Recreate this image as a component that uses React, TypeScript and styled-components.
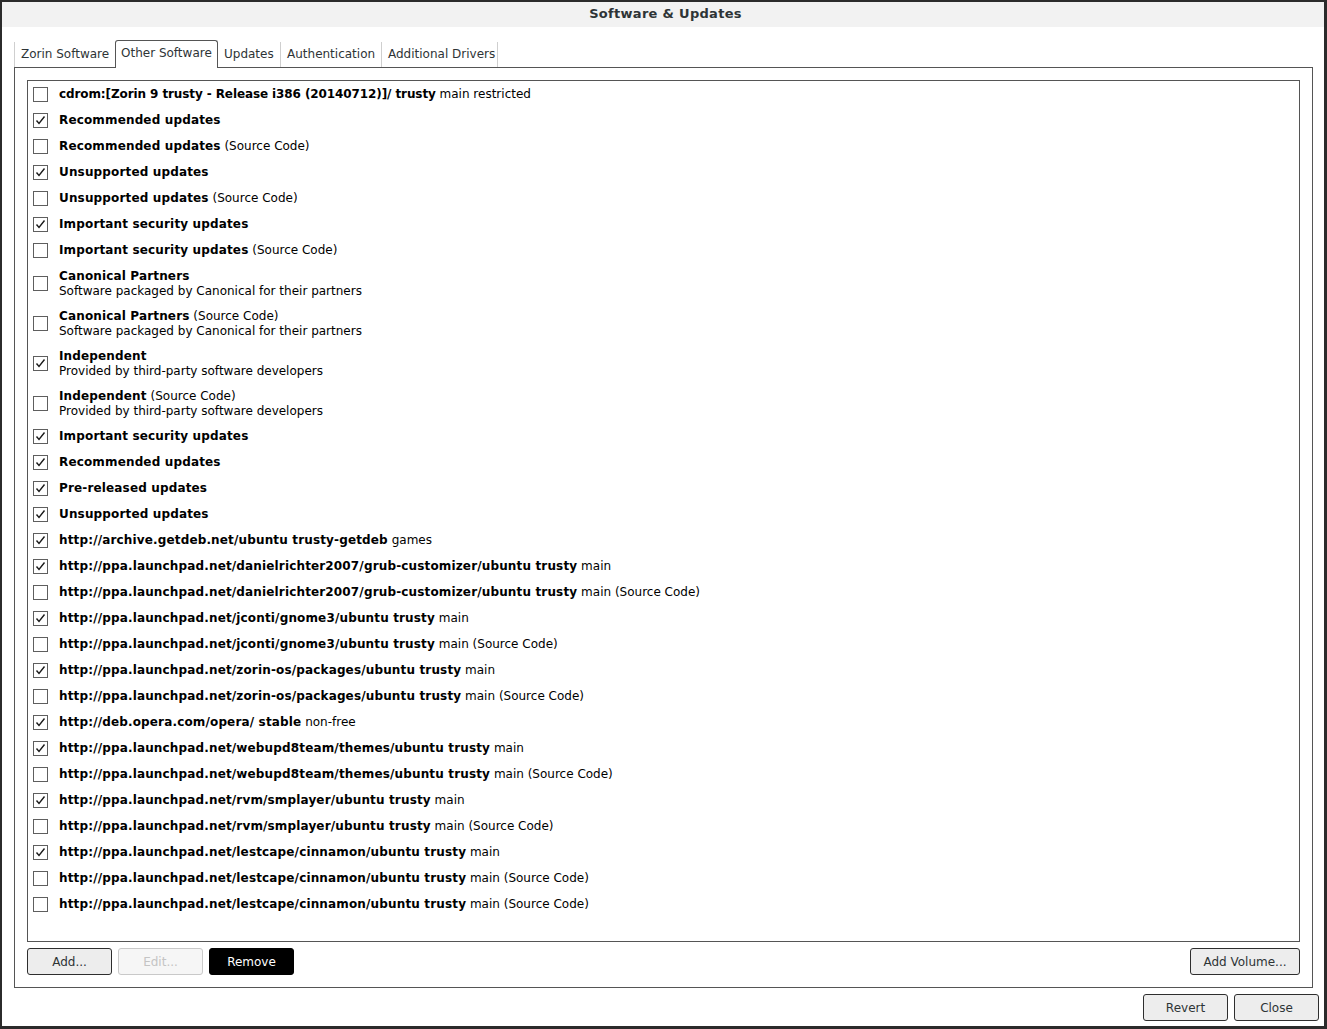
import React from "react";
import styled, { createGlobalStyle } from "styled-components";

const GlobalStyle = createGlobalStyle`
  html, body { margin: 0; padding: 0; background: #2b2b2b; }
  * { box-sizing: border-box; }
  body { font-family: "DejaVu Sans", "Liberation Sans", sans-serif; font-size: 12px; }
`;

const Window = styled.div`
  width: 1327px;
  height: 1029px;
  border: 2px solid #2b2b2b;
  border-right-width: 3px;
  border-bottom-width: 3px;
  background: #ffffff;
  display: flex;
  flex-direction: column;
`;

const TitleBar = styled.div`
  height: 25px;
  background: #f2f2f2;
  display: flex;
  align-items: center;
  justify-content: center;
  font-weight: bold;
  font-size: 13px;
  letter-spacing: 0.3px;
  color: #2e3436;
  flex-shrink: 0;
  padding: 0 0 2px 5px;
`;

const Body = styled.div`
  flex: 1;
  display: flex;
  flex-direction: column;
  padding-top: 13px;
`;

const Notebook = styled.div`
  margin: 0 11px 0 12px;
  display: flex;
  flex-direction: column;
`;

const TabRow = styled.div`
  display: flex;
  align-items: flex-end;
  height: 28px;
  border-bottom: 1px solid #555555;
`;

const Tab = styled.div<{ $active?: boolean; $first?: boolean; $w: number }>`
  display: flex;
  align-items: center;
  width: ${(p) => p.$w}px;
  color: #2e3436;
  background: #ffffff;
  white-space: nowrap;
  flex-shrink: 0;
  ${(p) =>
    p.$active
      ? `
    height: 28px;
    margin-bottom: -1px;
    margin-left: -1px;
    border: 1px solid #555555;
    border-bottom: none;
    border-radius: 3px 3px 0 0;
    padding: 0 0 3px 5px;
  `
      : `
    height: 25px;
    border-right: 1px solid #cfcfcf;
    ${p.$first ? "border-left: 1px solid #cfcfcf;" : ""}
    padding: 0 0 2px 6px;
  `}
`;

const Panel = styled.div`
  height: 920px;
  border: 1px solid #555555;
  border-top: none;
  padding: 12px;
  display: flex;
  flex-direction: column;
  gap: 6px;
`;

const ListFrame = styled.div`
  height: 862px;
  border: 1px solid #555555;
  background: #ffffff;
  display: flex;
  flex-direction: column;
`;

const Row = styled.div<{ $double?: boolean }>`
  height: ${(p) => (p.$double ? 40 : 26)}px;
  display: flex;
  align-items: center;
  padding-left: 5px;
  gap: 11px;
  color: #000000;
`;

const Box = styled.div`
  width: 15px;
  height: 15px;
  border: 1px solid #5e5e5e;
  background: #ffffff;
  display: flex;
  align-items: center;
  justify-content: center;
  flex-shrink: 0;
`;

const Label = styled.div<{ $double?: boolean }>`
  display: flex;
  flex-direction: column;
  line-height: 15px;
  white-space: nowrap;
  padding-top: ${(p) => (p.$double ? 2 : 0)}px;
`;

const Strong = styled.span<{ $tight?: boolean }>`
  font-weight: bold;
  letter-spacing: ${(p) => (p.$tight ? -0.1 : 0.15)}px;
`;

const ButtonRow = styled.div`
  display: flex;
  gap: 6px;
  height: 27px;
`;

const Spacer = styled.div`
  flex: 1;
`;

const Button = styled.button<{ $variant?: "normal" | "disabled" | "dark"; $w?: number }>`
  width: ${(p) => p.$w ?? 85}px;
  height: 27px;
  border-radius: 3px;
  font-family: "DejaVu Sans", "Liberation Sans", sans-serif;
  font-size: 12px;
  padding: 0;
  ${(p) =>
    p.$variant === "disabled"
      ? `border: 1px solid #c9c9c9; background: #f6f6f6; color: #c4c4c4;`
      : p.$variant === "dark"
      ? `border: 1px solid #000000; background: #000000; color: #ffffff;`
      : `border: 1px solid #2e2e2e; background: #ededed; color: #2e3436;`}
`;

const Footer = styled.div`
  display: flex;
  justify-content: flex-end;
  gap: 6px;
  margin-top: 6px;
  padding-right: 5px;
`;

type Item = {
  on: boolean;
  b: string;
  n?: string;
  sub?: string;
  tight?: boolean;
};

const SC = "(Source Code)";
const CAN = "Software packaged by Canonical for their partners";
const IND = "Provided by third-party software developers";
const L = "http://ppa.launchpad.net/";

const items: Item[] = [
  { on: false, b: "cdrom:[Zorin 9 trusty - Release i386 (20140712)]/ trusty", n: "main restricted", tight: true },
  { on: true, b: "Recommended updates" },
  { on: false, b: "Recommended updates", n: SC },
  { on: true, b: "Unsupported updates" },
  { on: false, b: "Unsupported updates", n: SC },
  { on: true, b: "Important security updates" },
  { on: false, b: "Important security updates", n: SC },
  { on: false, b: "Canonical Partners", sub: CAN },
  { on: false, b: "Canonical Partners", n: SC, sub: CAN },
  { on: true, b: "Independent", sub: IND },
  { on: false, b: "Independent", n: SC, sub: IND },
  { on: true, b: "Important security updates" },
  { on: true, b: "Recommended updates" },
  { on: true, b: "Pre-released updates" },
  { on: true, b: "Unsupported updates" },
  { on: true, b: "http://archive.getdeb.net/ubuntu trusty-getdeb", n: "games" },
  { on: true, b: L + "danielrichter2007/grub-customizer/ubuntu trusty", n: "main" },
  { on: false, b: L + "danielrichter2007/grub-customizer/ubuntu trusty", n: "main " + SC },
  { on: true, b: L + "jconti/gnome3/ubuntu trusty", n: "main" },
  { on: false, b: L + "jconti/gnome3/ubuntu trusty", n: "main " + SC },
  { on: true, b: L + "zorin-os/packages/ubuntu trusty", n: "main" },
  { on: false, b: L + "zorin-os/packages/ubuntu trusty", n: "main " + SC },
  { on: true, b: "http://deb.opera.com/opera/ stable", n: "non-free" },
  { on: true, b: L + "webupd8team/themes/ubuntu trusty", n: "main" },
  { on: false, b: L + "webupd8team/themes/ubuntu trusty", n: "main " + SC },
  { on: true, b: L + "rvm/smplayer/ubuntu trusty", n: "main" },
  { on: false, b: L + "rvm/smplayer/ubuntu trusty", n: "main " + SC },
  { on: true, b: L + "lestcape/cinnamon/ubuntu trusty", n: "main" },
  { on: false, b: L + "lestcape/cinnamon/ubuntu trusty", n: "main " + SC },
  { on: false, b: L + "lestcape/cinnamon/ubuntu trusty", n: "main " + SC },
];

const Check = ({ on }: { on: boolean }) => (
  <Box>
    {on && (
      <svg width="13" height="13" viewBox="0 0 13 13">
        <path d="M2.5 6.5 L5 9.5 L10.5 2.5" fill="none" stroke="#1a1a1a" strokeWidth="1.4" />
      </svg>
    )}
  </Box>
);

const tabs: { t: string; w: number }[] = [
  { t: "Zorin Software", w: 102 },
  { t: "Other Software", w: 103 },
  { t: "Updates", w: 63 },
  { t: "Authentication", w: 101 },
  { t: "Additional Drivers", w: 116 },
];

export default function App() {
  return (
    <>
      <GlobalStyle />
      <Window>
        <TitleBar>Software &amp; Updates</TitleBar>
        <Body>
          <Notebook>
            <TabRow>
              {tabs.map((t, i) => (
                <Tab key={t.t} $w={t.w} $active={i === 1} $first={i === 0}>
                  {t.t}
                </Tab>
              ))}
            </TabRow>
            <Panel>
              <ListFrame>
                {items.map((it, i) => (
                  <Row key={i} $double={!!it.sub}>
                    <Check on={it.on} />
                    <Label $double={!!it.sub}>
                      <span>
                        <Strong $tight={it.tight}>{it.b}</Strong>
                        {it.n ? " " + it.n : ""}
                      </span>
                      {it.sub && <span>{it.sub}</span>}
                    </Label>
                  </Row>
                ))}
              </ListFrame>
              <ButtonRow>
                <Button>Add...</Button>
                <Button $variant="disabled">Edit...</Button>
                <Button $variant="dark">Remove</Button>
                <Spacer />
                <Button $w={110}>Add Volume...</Button>
              </ButtonRow>
            </Panel>
          </Notebook>
          <Footer>
            <Button>Revert</Button>
            <Button>Close</Button>
          </Footer>
        </Body>
      </Window>
    </>
  );
}
